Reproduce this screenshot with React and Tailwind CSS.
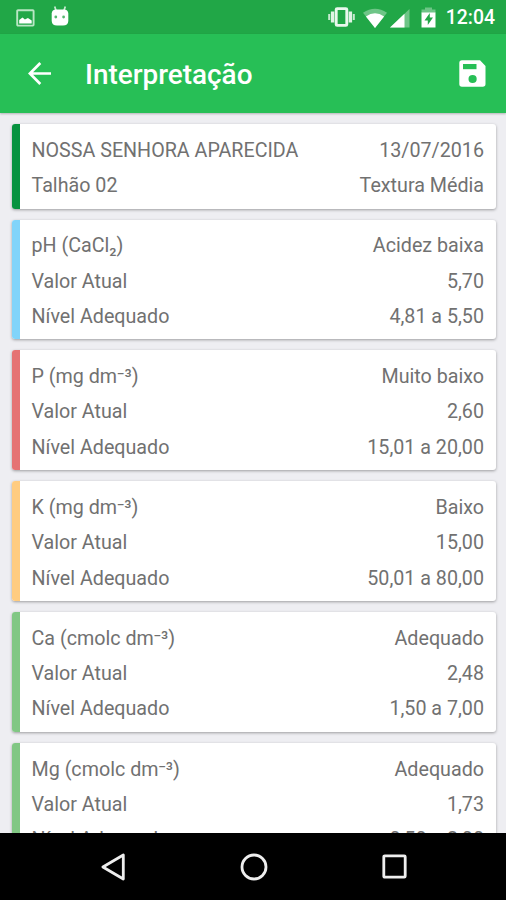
const cards = [
  {
    stripe: 'bg-[#07923f]',
    rows: [
      ['NOSSA SENHORA APARECIDA', '13/07/2016'],
      ['Talhão 02', 'Textura Média'],
    ],
  },
  {
    stripe: 'bg-[#81d4fa]',
    rows: [
      ['pH (CaCl₂)', 'Acidez baixa'],
      ['Valor Atual', '5,70'],
      ['Nível Adequado', '4,81 a 5,50'],
    ],
  },
  {
    stripe: 'bg-[#e57373]',
    rows: [
      ['P (mg dm⁻³)', 'Muito baixo'],
      ['Valor Atual', '2,60'],
      ['Nível Adequado', '15,01 a 20,00'],
    ],
  },
  {
    stripe: 'bg-[#ffcc80]',
    rows: [
      ['K (mg dm⁻³)', 'Baixo'],
      ['Valor Atual', '15,00'],
      ['Nível Adequado', '50,01 a 80,00'],
    ],
  },
  {
    stripe: 'bg-[#81c784]',
    rows: [
      ['Ca (cmolc dm⁻³)', 'Adequado'],
      ['Valor Atual', '2,48'],
      ['Nível Adequado', '1,50 a 7,00'],
    ],
  },
  {
    stripe: 'bg-[#81c784]',
    rows: [
      ['Mg (cmolc dm⁻³)', 'Adequado'],
      ['Valor Atual', '1,73'],
      ['Nível Adequado', '0,50 a 2,00'],
    ],
  },
];

function StatusBar() {
  return (
    <div className="flex h-[34px] shrink-0 items-center bg-[#21a747] pl-4 pr-[11px] text-white">
      <svg className="mt-[1px] h-[18px] w-[19px]" viewBox="0 0 19 18">
        <rect x="1.2" y="1.2" width="16.4" height="15.4" rx="0.8" fill="none" stroke="#b9e6c4" strokeWidth="1.9" />
        <path d="M3.2 14.5V11l3.300-2.500 2.400 2 3-1.500 3.800 2.500v3z" fill="#fff" />
      </svg>
      <svg className="mb-[2px] ml-[15.500px] h-5 w-[18px]" viewBox="0 0 18 20">
        <path d="M3.700.5 5 4.500M14.300.5l-1.300 4" stroke="#c7ebd0" strokeWidth="1.700" />
        <path d="M.7 7.500Q1 3.500 5 3.500h8q4 0 4.300 4V15q-.3 4.500-5.300 4.500H6Q1 19.500.7 15z" fill="#fff" />
        <circle cx="4.800" cy="11" r="1.400" fill="#55b86f" />
        <circle cx="12.600" cy="11" r="1.400" fill="#55b86f" />
      </svg>
      <svg className="ml-auto h-5 w-[27px]" viewBox="0 0 27 20">
        <path d="M1.200 7v6M25.800 7v6" stroke="#c7ebd0" strokeWidth="2" />
        <path d="M4.600 4.500v11M22.400 4.500v11" stroke="#dff4e4" strokeWidth="3.400" />
        <rect x="8.200" y="1.600" width="10.600" height="16.800" rx="1" fill="none" stroke="#e9f8ed" strokeWidth="2.900" />
      </svg>
      <svg className="ml-2 mt-[1px] h-5 w-6" viewBox="0 0 24 20">
        <path d="M0 4.800Q12-3.500 24 4.800L12 20z" fill="#fff" fillOpacity=".35" />
        <path d="M2.900 8.500Q12 2 21.100 8.500L12 20z" fill="#fff" />
      </svg>
      <svg className="ml-[3px] mt-[1px] h-5 w-[20px]" viewBox="0 0 20 20">
        <path d="M0 19.500 19.500 1v18.500z" fill="#fff" fillOpacity=".35" />
        <path d="M0 19.500 14.500 5.700v13.800z" fill="#fff" />
      </svg>
      <svg className="ml-[11px] mt-[1px] h-[21px] w-[15px]" viewBox="0 0 15 21">
        <path d="M.5 6V2.500H4V.5h7v2h3.500V6z" fill="#fff" fillOpacity=".35" />
        <path d="M.5 5.500h14v15H.5z" fill="#fff" />
        <path d="M8.800 6 3.500 13.500h3.300v4.500l5.200-7.500H8.800z" fill="#21a747" />
      </svg>
      <span className="ml-[9px] mt-[2px] w-[50px] whitespace-nowrap text-right text-[19.400px] font-medium leading-[34px]">12:04</span>
    </div>
  );
}

function AppBar() {
  return (
    <header className="relative z-10 flex h-[79px] shrink-0 items-center bg-[#27bf56] pl-7 pr-5 text-white shadow-[0_1px_2px_rgba(0,0,0,0.25)]">
      <svg className="mb-[1px] h-[23px] w-[23px]" viewBox="0 0 23 23" fill="none" stroke="#fff" strokeWidth="2.700">
        <path d="M12.300 1 1.900 11.500 12.300 22M1.900 11.500H23" />
      </svg>
      <h1 className="ml-[34px] mt-[3px] text-[27.900px] font-medium leading-9">Interpretação</h1>
      <svg className="ml-auto h-[27px] w-[27px]" viewBox="0 0 27 27">
        <path d="M3 .3h18L26.500 6v18a2.700 2.700 0 0 1-2.700 2.700H3A2.700 2.700 0 0 1 .3 24V3A2.700 2.700 0 0 1 3 .3z" fill="#fff" />
        <path d="M4 4h13.500v5.200H4z" fill="#27bf56" />
        <circle cx="13.600" cy="19" r="4.100" fill="#27bf56" />
      </svg>
    </header>
  );
}

function Card({ stripe, rows }) {
  return (
    <section className="flex shrink-0 overflow-hidden rounded-[3px] bg-white shadow-[0_1px_3px_rgba(0,0,0,0.35)]">
      <div className={`w-2 shrink-0 ${stripe}`} />
      <div className="flex-1 py-[7px] pl-[11.500px] pr-[11.500px]">
        {rows.map(([label, value]) => (
          <div key={label} className="flex h-[35.250px] items-center justify-between whitespace-nowrap pt-[4px]">
            <span>{label}</span>
            <span>{value}</span>
          </div>
        ))}
      </div>
    </section>
  );
}

function NavBar() {
  return (
    <nav className="flex h-[67px] shrink-0 items-center bg-black pl-[101px] pr-[99px]">
      <svg className="h-7 w-[25px]" viewBox="0 0 25 28" fill="none" stroke="#eee" strokeWidth="2.800" strokeLinejoin="round">
        <path d="M22.300 2v24L1.900 14z" />
      </svg>
      <svg className="ml-auto h-7 w-7" viewBox="0 0 28 28" fill="none" stroke="#eee" strokeWidth="2.800">
        <circle cx="14" cy="14" r="12" />
      </svg>
      <svg className="ml-auto h-[25px] w-[25px]" viewBox="0 0 25 25" fill="none" stroke="#eee" strokeWidth="2.800">
        <rect x="1.800" y="1.800" width="21.400" height="21.400" rx="1" />
      </svg>
    </nav>
  );
}

export default function App() {
  return (
    <div className="flex h-[900px] w-[506px] flex-col overflow-hidden bg-[#eeeef2] font-[Roboto,'Noto_Sans',sans-serif]">
      <StatusBar />
      <AppBar />
      <main className="flex min-h-0 flex-1 flex-col gap-[11.100px] overflow-hidden pl-3 pr-[10.500px] pt-[11px] text-[19.700px] leading-none text-[#717171]">
        {cards.map((card, i) => (
          <Card key={i} {...card} />
        ))}
      </main>
      <NavBar />
    </div>
  );
}
